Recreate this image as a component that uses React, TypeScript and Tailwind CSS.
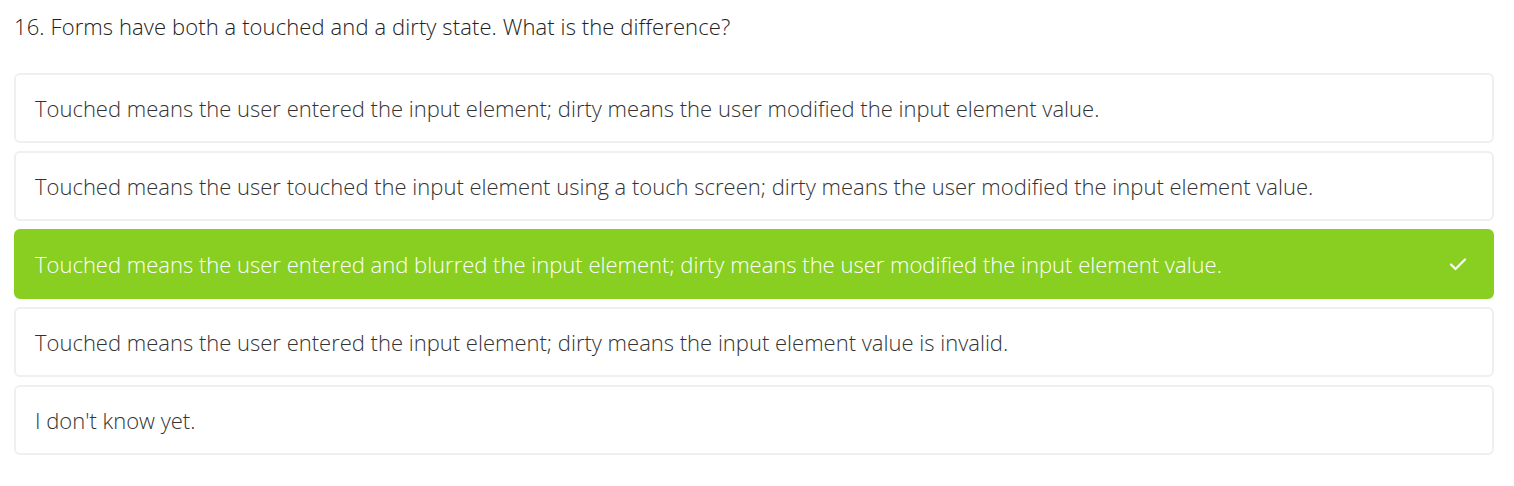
import React from 'react';

const options = [
  { text: 'Touched means the user entered the input element; dirty means the user modified the input element value.', correct: false },
  { text: 'Touched means the user touched the input element using a touch screen; dirty means the user modified the input element value.', correct: false },
  { text: 'Touched means the user entered and blurred the input element; dirty means the user modified the input element value.', correct: true },
  { text: 'Touched means the user entered the input element; dirty means the input element value is invalid.', correct: false },
  { text: "I don't know yet.", correct: false },
];

const App: React.FC = () => {
  return (
    <div className="w-[1514px] h-[486px] bg-white px-[14px] pt-[11px] font-['Open_Sans','Liberation_Sans',sans-serif] font-light">
      <h2 className="text-[22px] leading-[30px] text-[#222] font-light tracking-[0.1px]">
        16. Forms have both a touched and a dirty state. What is the difference?
      </h2>
      <div className="mt-[32px] w-[1480px] flex flex-col gap-[8px]">
        {options.map((opt, i) => (
          <div
            key={i}
            className={
              opt.correct
                ? 'h-[70px] flex items-center justify-between rounded-[6px] border-2 border-[#88cf22] bg-[#88cf22] pl-[19px] pr-[24px] text-white'
                : 'h-[70px] flex items-center justify-between rounded-[6px] border-2 border-[#efefef] bg-white pl-[19px] pr-[24px] text-[#333]'
            }
          >
            <span className="text-[22px] leading-[30px]">{opt.text}</span>
            {opt.correct && (
              <svg width="20" height="20" viewBox="0 0 20 20" fill="none" stroke="white" strokeWidth="2.2" strokeLinecap="round" strokeLinejoin="round">
                <path d="M3 10.5l4.5 4.5L17 5.5" />
              </svg>
            )}
          </div>
        ))}
      </div>
    </div>
  );
};

export default App;
